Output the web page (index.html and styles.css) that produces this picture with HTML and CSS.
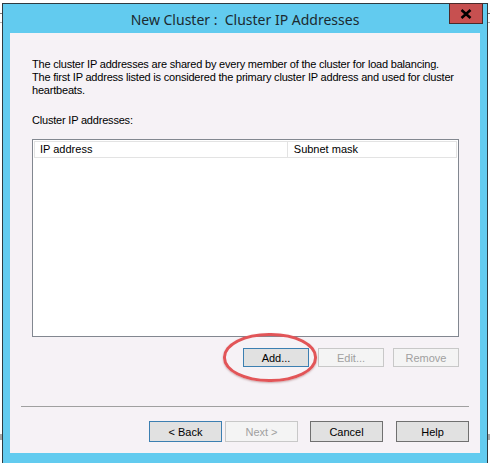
FILE: index.html
```html
<!DOCTYPE html>
<html lang="en">
<head>
    <meta charset="UTF-8">
    <title>New Cluster : Cluster IP Addresses</title>
    <link rel="stylesheet" href="styles.css">
</head>
<body>
    <div class="window">
        <div class="title-bar">
            <div class="title">New Cluster :&nbsp; Cluster IP Addresses</div>
            <button class="close-btn" aria-label="Close">
                <svg width="12" height="10" viewBox="0 0 12 10"><path d="M1.5 1 L10.5 9 M10.5 1 L1.5 9" stroke="#000" stroke-width="2.6"/></svg>
            </button>
        </div>
        <div class="client">
            <p class="intro">The cluster IP addresses are shared by every member of the cluster for load balancing.<br>The first IP address listed is considered the primary cluster IP address and used for cluster<br>heartbeats.</p>
            <div class="label">Cluster IP addresses:</div>
            <div class="listbox">
                <div class="list-header">
                    <div class="col col-ip">IP address</div>
                    <div class="col col-mask">Subnet mask</div>
                </div>
            </div>
            <div class="list-buttons">
                <div class="btn-wrap">
                    <button class="btn btn-default">Add...</button>
                    <div class="highlight"></div>
                </div>
                <button class="btn" disabled>Edit...</button>
                <button class="btn" disabled>Remove</button>
            </div>
            <div class="separator"></div>
            <div class="wizard-buttons">
                <button class="btn btn-wide btn-default">&lt; Back</button>
                <button class="btn btn-wide" disabled>Next &gt;</button>
                <button class="btn btn-wide btn-cancel">Cancel</button>
                <button class="btn btn-wide">Help</button>
            </div>
        </div>
    </div>
</body>
</html>
```

FILE: styles.css
```css
body {
    margin: 0;
    font-family: "Liberation Sans", Arial, sans-serif;
    font-size: 11px;
    color: #000;
    /* bits of the windows behind the dialog */
    background:
        linear-gradient(#7a7a7a, #7a7a7a) 0 13px / 2px 1px no-repeat,
        linear-gradient(#b0b0b0, #b0b0b0) 0 22px / 2px 1px no-repeat,
        linear-gradient(#a8a8a8, #a8a8a8) 0 434px / 2px 6px no-repeat,
        linear-gradient(#7a7a7a, #7a7a7a) 488px 13px / 2px 1px no-repeat,
        linear-gradient(#b0b0b0, #b0b0b0) 488px 22px / 2px 1px no-repeat,
        linear-gradient(#a8a8a8, #a8a8a8) 488px 434px / 2px 6px no-repeat,
        #fff;
}
.window {
    margin: 3px 0 0 2px;
    width: 470px;
    height: 455px;
    border: 1px solid #2e3a40;
    background-color: #62cbef;
    padding: 0 7px 6px 7px;
}
.title-bar {
    position: relative;
    height: 29px;
    display: flex;
    justify-content: center;
    align-items: center;
}
.title {
    font-family: "Noto Sans", sans-serif;
    font-size: 14px;
    color: #1c2a30;
    margin-top: 1px;
}
.close-btn {
    position: absolute;
    top: -1px;
    right: -3px;
    width: 34px;
    height: 21px;
    background-color: #c75050;
    border: 1px solid #4a2a2a;
    padding: 0;
    display: flex;
    justify-content: center;
    align-items: center;
}
.client {
    background-color: #f6f2f6;
    height: 420px;
    display: flex;
    flex-direction: column;
    padding: 0 11px;
}
.intro {
    margin: 25px 0 0 11px;
    line-height: 13px;
    white-space: nowrap;
    letter-spacing: -0.2px;
}
.label {
    margin: 17px 0 0 11px;
    line-height: 13px;
    letter-spacing: -0.2px;
}
.listbox {
    margin: 12px 10px 0 11px;
    height: 198px;
    border: 1px solid #828790;
    background-color: #fff;
    padding: 1px;
    box-sizing: border-box;
}
.list-header {
    display: flex;
    height: 17px;
}
.col {
    border: 1px solid #e3e3e3;
    padding-left: 5px;
    line-height: 15px;
    box-sizing: border-box;
}
.col-ip {
    width: 255px;
}
.col-mask {
    width: 170px;
    border-left: none;
    padding-left: 6px;
}
.list-buttons {
    display: flex;
    justify-content: flex-end;
    gap: 9px;
    margin: 11px 10px 0 0;
}
.btn-wrap {
    position: relative;
    display: flex;
}
.btn {
    width: 66px;
    height: 19px;
    padding: 0;
    font-family: "Liberation Sans", Arial, sans-serif;
    font-size: 11px;
    color: #000;
    background-color: #e1e1e1;
    border: 1px solid #adadad;
    border-radius: 0;
}
.btn:disabled {
    color: #a0a0a0;
    background-color: #f4f4f4;
    border-color: #c8c8c8;
}
.btn-default {
    border-color: #3c7fb1;
}
.highlight {
    position: absolute;
    left: -20px;
    top: -15px;
    width: 88px;
    height: 43px;
    border: 3px solid #e25558;
    border-radius: 46px / 24px;
    box-shadow: 0 1px 2px rgba(120, 40, 40, 0.35);
    pointer-events: none;
}
.separator {
    margin-top: 39px;
    height: 1px;
    background-color: #a0a0a0;
}
.wizard-buttons {
    display: flex;
    justify-content: flex-end;
    margin-top: 14px;
}
.btn-wide {
    width: 73px;
    height: 21px;
    margin-left: 3px;
    border-color: #707070;
}
.btn-wide:disabled {
    border-color: #c8c8c8;
}
.btn-wide.btn-default {
    border-color: #3c7fb1;
}
.btn-cancel {
    margin-left: 12px;
}
.wizard-buttons .btn:last-child {
    margin-left: 13px;
}
```
